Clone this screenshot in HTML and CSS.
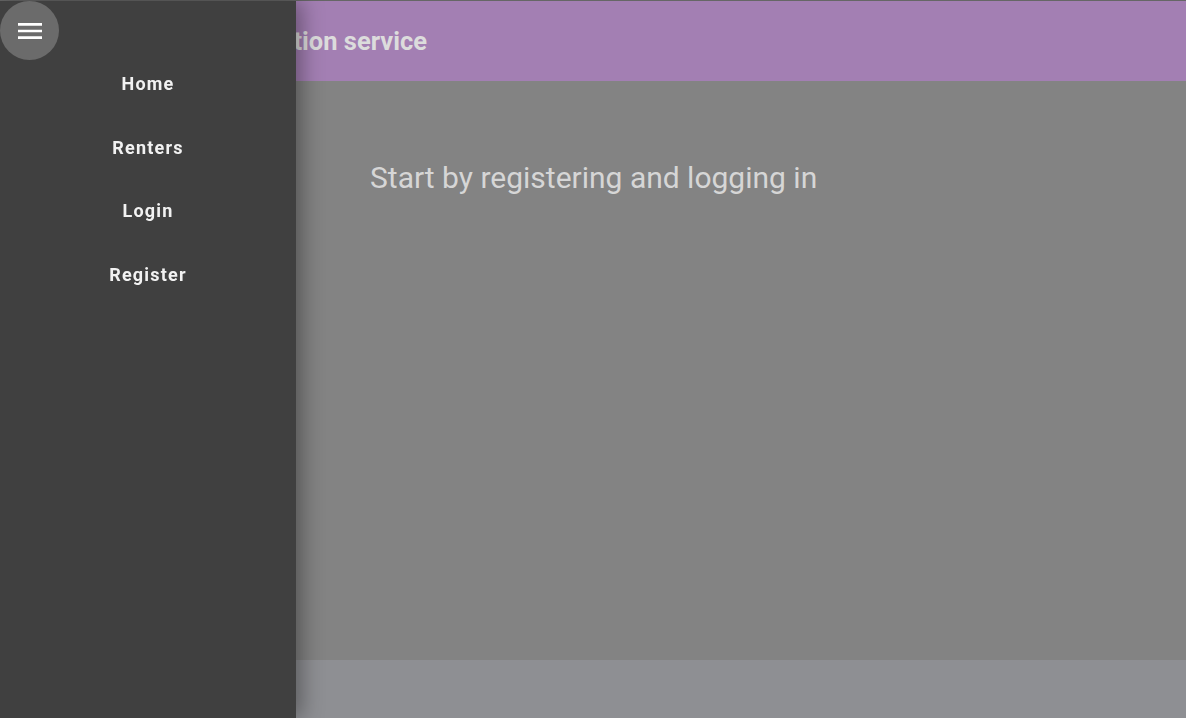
FILE: index.html
```html
<!DOCTYPE html>
<html lang="en">
<head>
<meta charset="utf-8">
<title>Rental registration service</title>
<link rel="stylesheet" href="styles.css">
</head>
<body>
<div class="app">
  <header class="topbar">
    <h1 class="title">Apartment rental registration service</h1>
  </header>
  <main class="content">
    <p class="lead">Start by registering and logging in</p>
  </main>
  <footer class="footer"></footer>
</div>
<aside class="drawer">
  <button class="menu-btn" aria-label="Menu">
    <svg viewBox="0 0 24 24" width="32" height="32"><path d="M3 18h18v-2H3v2zm0-5h18v-2H3v2zm0-7v2h18V6H3z" fill="#fff"/></svg>
  </button>
  <nav class="nav">
    <a href="#">Home</a>
    <a href="#">Renters</a>
    <a href="#">Login</a>
    <a href="#">Register</a>
  </nav>
</aside>
</body>
</html>
```

FILE: styles.css
```css
* { box-sizing: border-box; }
html, body { margin: 0; height: 100%; }
body {
  font-family: Roboto, "Liberation Sans", sans-serif;
  background: #838383;
  border-top: 1px solid #666;
  overflow: hidden;
}
.app {
  height: 717px;
  display: flex;
  flex-direction: column;
}
.topbar {
  height: 80px;
  background: #a37fb3;
  display: flex;
  align-items: center;
  justify-content: flex-end;
  padding-right: 759px;
}
.title {
  margin: 0;
  font-size: 25.5px;
  font-weight: 700;
  color: #dcdcdc;
  white-space: nowrap;
}
.content {
  flex: 1;
  background: #838383;
  padding: 79px 0 0 370px;
}
.lead {
  margin: 0;
  font-size: 30px;
  line-height: 35px;
  color: #d6d6d6;
}
.footer {
  height: 58px;
  background: #8e8f93;
}
.drawer {
  position: fixed;
  top: 1px;
  left: 0;
  bottom: 0;
  width: 296px;
  background: #404040;
  box-shadow: 6px 0 20px rgba(0,0,0,0.35);
}
.menu-btn {
  position: absolute;
  top: 0;
  left: 0;
  width: 59px;
  height: 59px;
  border: 0;
  border-radius: 50%;
  background: #6b6b6b;
  padding: 0;
  display: flex;
  align-items: center;
  justify-content: center;
}
.nav {
  display: flex;
  flex-direction: column;
  align-items: center;
  padding-top: 59px;
}
.nav a {
  height: 63.5px;
  line-height: 48px;
  color: #f2f2f2;
  text-decoration: none;
  font-size: 18px;
  font-weight: 700;
  letter-spacing: 1.2px;
}
```
